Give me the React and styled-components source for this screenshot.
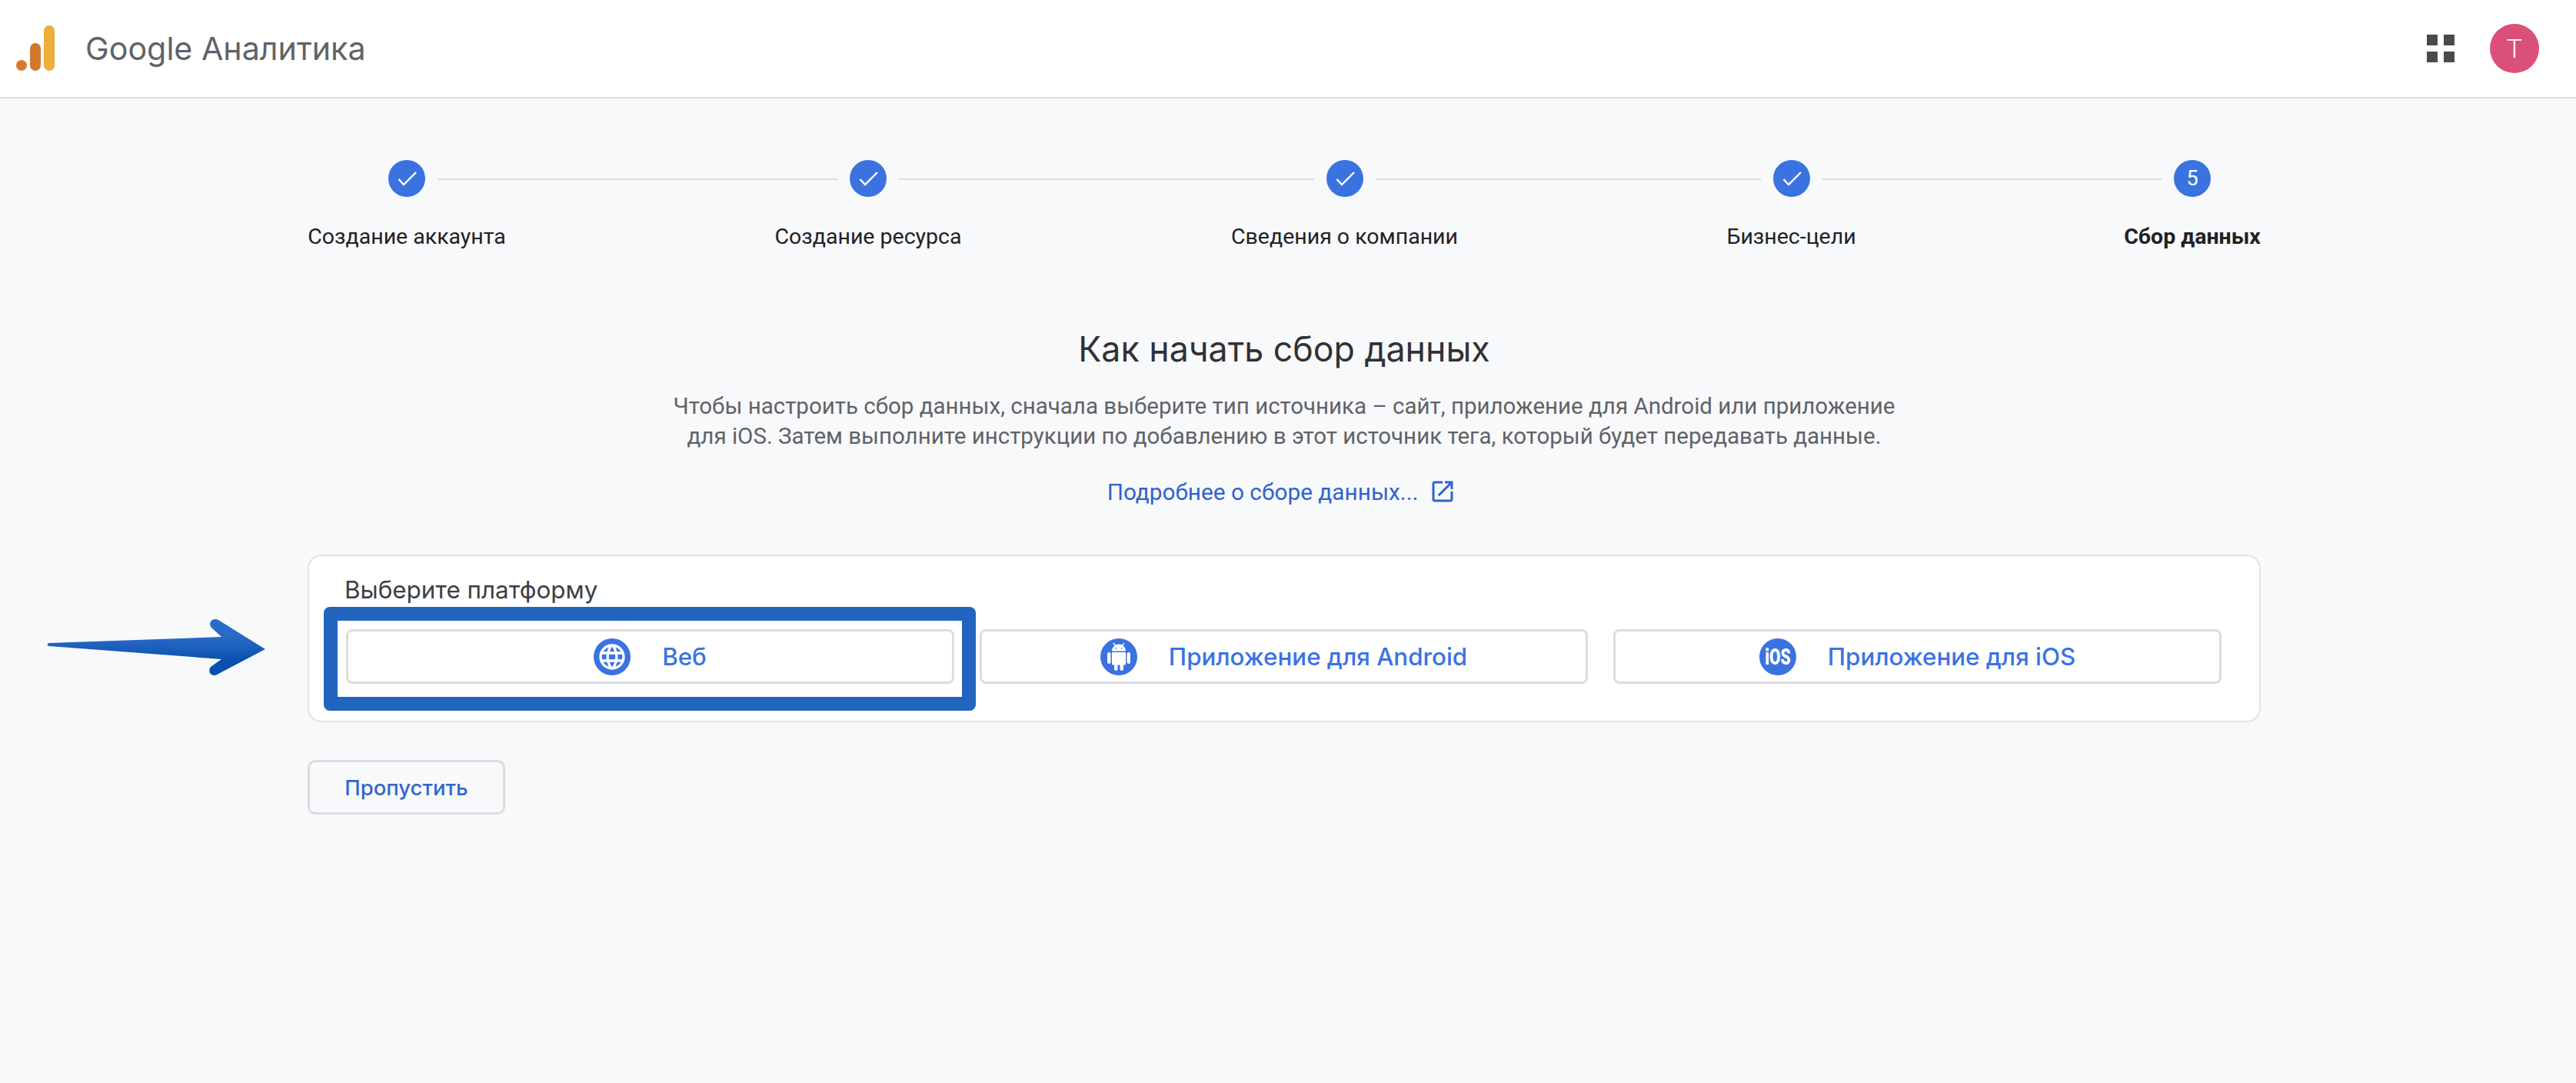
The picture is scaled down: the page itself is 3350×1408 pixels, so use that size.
import React from 'react';
import styled, { createGlobalStyle } from 'styled-components';

const Global = createGlobalStyle`
  html, body { margin: 0; padding: 0; background: #f8f9fb; }
  body { font-family: Roboto, "Liberation Sans", sans-serif; }
`;

const Page = styled.div`
  position: relative;
  width: 3350px;
  height: 1408px;
  overflow: hidden;
  background: #f8f9fb;
`;

const Header = styled.header`
  display: flex;
  align-items: center;
  height: 126px;
  padding: 0 48px 0 21px;
  background: #fff;
  border-bottom: 2px solid #dcdce2;
`;

const Logo = styled.svg`
  width: 50px;
  height: 60px;
  flex: none;
`;

const Title = styled.div`
  margin-left: 40px;
  font-family: "Inter", sans-serif;
  font-size: 41.2px;
  line-height: 60px;
  color: #5f6368;
`;

const HeaderRight = styled.div`
  margin-left: auto;
  display: flex;
  align-items: center;
  gap: 46px;
`;

const Apps = styled.div`
  display: grid;
  grid-template-columns: 14px 14px;
  grid-auto-rows: 14px;
  gap: 8px;
`;

const AppDot = styled.span`
  background: #4a4a4a;
`;

const Avatar = styled.div`
  width: 64px;
  height: 64px;
  border-radius: 50%;
  background: #db5078;
  color: #fff;
  display: flex;
  align-items: center;
  justify-content: center;
  font-size: 34px;
  font-weight: 300;
`;

const Main = styled.main`
  padding: 80px 410px 0 400px;
`;

const Stepper = styled.div`
  display: flex;
  align-items: flex-start;
`;

const Step = styled.div`
  flex: none;
  width: ${p => p.$w}px;
  display: flex;
  flex-direction: column;
  align-items: center;
  position: relative;
`;

const StepCircle = styled.div`
  width: 48px;
  height: 48px;
  border-radius: 50%;
  background: #3a73e0;
  color: #fff;
  display: flex;
  align-items: center;
  justify-content: center;
  font-size: 27px;
`;

const StepLabel = styled.div`
  margin-top: 32px;
  font-size: 28.5px;
  line-height: 40px;
  white-space: nowrap;
  color: #202124;
  font-weight: ${p => (p.$active ? 700 : 400)};
`;

const ConnectorSlot = styled.div`
  flex: 1;
  min-width: 0;
  padding-top: 24px;
`;

const ConnectorLine = styled.div`
  height: 2px;
  margin-left: -${p => p.$l}px;
  margin-right: -${p => p.$r}px;
  background: #dadce0;
`;

const Heading = styled.h1`
  margin: 96px 0 0;
  text-align: center;
  font-family: "Inter", sans-serif;
  font-weight: 400;
  font-size: 44.7px;
  line-height: 60px;
  color: #303134;
`;

const Lead = styled.p`
  margin: 25px auto 0;
  width: 1640px;
  text-align: center;
  font-size: 29.5px;
  line-height: 39px;
  color: #5f6368;
`;

const LinkRow = styled.a`
  margin-top: 32px;
  padding-right: 6px;
  display: flex;
  justify-content: center;
  align-items: center;
  gap: 14px;
  height: 40px;
  font-size: 29.8px;
  color: #2f63cf;
`;

const Card = styled.section`
  margin-top: 62px;
  height: 218px;
  box-sizing: border-box;
  padding: 24px 48px 0;
  background: #fff;
  border: 2px solid #e3e3e6;
  border-radius: 18px;
`;

const CardLabel = styled.div`
  margin-left: -2px;
  font-family: "Inter", sans-serif;
  font-size: 31.4px;
  line-height: 40px;
  color: #3c4043;
`;

const Platforms = styled.div`
  margin-top: 31px;
  display: grid;
  grid-template-columns: repeat(3, 791px);
  gap: 33px;
`;

const PlatformButton = styled.div`
  position: relative;
  box-sizing: border-box;
  height: 71px;
  display: flex;
  align-items: center;
  justify-content: center;
  gap: 41px;
  border: 3px solid #dddde2;
  border-radius: 8px;
  background: #fff;
  font-family: "Inter", sans-serif;
  font-size: 31.3px;
  font-weight: 500;
  color: #3a73e2;
`;

const Highlight = styled.div`
  position: absolute;
  left: -32px;
  top: -32px;
  right: -31px;
  bottom: -38px;
  border: 18px solid #2265bf;
  border-radius: 8px;
  pointer-events: none;
`;

const IconCircle = styled.div`
  width: 48px;
  height: 48px;
  flex: none;
  border-radius: 50%;
  background: #3a73e0;
  color: #fff;
  display: flex;
  align-items: center;
  justify-content: center;
  overflow: hidden;
`;

const IosGlyph = styled.span`
  display: block;
  font-family: Roboto, sans-serif;
  font-size: 30px;
  font-weight: 900;
  line-height: 1;
  transform: scaleX(0.7);
`;

const SkipButton = styled.div`
  margin-top: 49px;
  width: 257px;
  height: 71px;
  box-sizing: border-box;
  display: flex;
  align-items: center;
  justify-content: center;
  border: 3px solid #dadce0;
  border-radius: 10px;
  font-family: "Inter", sans-serif;
  font-size: 27.5px;
  font-weight: 500;
  color: #3366cc;
`;

const Arrow = styled.svg`
  position: absolute;
  left: 56px;
  top: 800px;
  width: 296px;
  height: 84px;
`;

const Check = () => (
  <svg width="48" height="48" viewBox="0 0 48 48" fill="none">
    <path d="M13.5 25l6.5 7L36 16" stroke="#fff" strokeWidth="2.4" />
  </svg>
);

const steps = [
  { label: 'Создание аккаунта', w: 258 },
  { label: 'Создание ресурса', w: 244 },
  { label: 'Сведения о компании', w: 297 },
  { label: 'Бизнес-цели', w: 167 },
  { label: 'Сбор данных', w: 178, active: true, n: 5 },
];

const side = w => w / 2 - 40;

export default function App() {
  return (
    <Page>
      <Global />
      <Header>
        <Logo viewBox="0 0 50 60">
          <circle cx="7" cy="52" r="7" fill="#d8782c" />
          <rect x="18" y="23" width="14" height="36" rx="7" fill="#d5772b" />
          <rect x="36" y="0" width="14" height="59" rx="7" fill="#eeae3a" />
        </Logo>
        <Title>Google Аналитика</Title>
        <HeaderRight>
          <Apps>
            <AppDot /><AppDot /><AppDot /><AppDot />
          </Apps>
          <Avatar>T</Avatar>
        </HeaderRight>
      </Header>
      <Main>
        <Stepper>
          {steps.map((s, i) => (
            <React.Fragment key={s.label}>
              <Step $w={s.w}>
                <StepCircle>{s.n || <Check />}</StepCircle>
                <StepLabel $active={s.active}>{s.label}</StepLabel>
              </Step>
              {i < steps.length - 1 && (
                <ConnectorSlot>
                  <ConnectorLine $l={side(s.w)} $r={side(steps[i + 1].w)} />
                </ConnectorSlot>
              )}
            </React.Fragment>
          ))}
        </Stepper>
        <Heading>Как начать сбор данных</Heading>
        <Lead>
          Чтобы настроить сбор данных, сначала выберите тип источника – сайт, приложение для Android или приложение
          для iOS. Затем выполните инструкции по добавлению в этот источник тега, который будет передавать данные.
        </Lead>
        <LinkRow>
          Подробнее о сборе данных...
          <svg width="36" height="36" viewBox="0 0 24 24" fill="currentColor">
            <path d="M19 19H5V5h7V3H5c-1.11 0-2 .9-2 2v14c0 1.1.89 2 2 2h14c1.1 0 2-.9 2-2v-7h-2v7zM14 3v2h3.59l-9.83 9.83 1.41 1.41L19 6.41V10h2V3h-7z" />
          </svg>
        </LinkRow>
        <Card>
          <CardLabel>Выберите платформу</CardLabel>
          <Platforms>
            <PlatformButton>
              <IconCircle>
                <svg width="40" height="40" viewBox="0 0 24 24" fill="currentColor">
                  <path d="M11.99 2C6.47 2 2 6.48 2 12s4.47 10 9.99 10C17.52 22 22 17.52 22 12S17.52 2 11.99 2zm6.93 6h-2.95c-.32-1.25-.78-2.45-1.38-3.56 1.84.63 3.37 1.91 4.33 3.56zM12 4.04c.83 1.2 1.48 2.53 1.91 3.96h-3.82c.43-1.43 1.08-2.76 1.91-3.96zM4.26 14C4.1 13.36 4 12.69 4 12s.1-1.36.26-2h3.38c-.08.66-.14 1.32-.14 2 0 .68.06 1.34.14 2H4.26zm.82 2h2.95c.32 1.25.78 2.45 1.38 3.56-1.84-.63-3.37-1.9-4.33-3.56zm2.95-8H5.08c.96-1.66 2.49-2.93 4.33-3.56C8.81 5.55 8.35 6.75 8.03 8zM12 19.96c-.83-1.2-1.48-2.53-1.91-3.96h3.82c-.43 1.43-1.08 2.76-1.91 3.96zM14.34 14H9.66c-.09-.66-.16-1.32-.16-2 0-.68.07-1.35.16-2h4.68c.09.65.16 1.32.16 2 0 .68-.07 1.34-.16 2zm.25 5.56c.6-1.11 1.06-2.31 1.38-3.56h2.95c-.96 1.65-2.49 2.93-4.33 3.56zM16.36 14c.08-.66.14-1.32.14-2 0-.68-.06-1.34-.14-2h3.38c.16.64.26 1.31.26 2s-.1 1.36-.26 2h-3.38z" />
                </svg>
              </IconCircle>
              Веб
              <Highlight />
            </PlatformButton>
            <PlatformButton>
              <IconCircle>
                <svg width="36" height="36" viewBox="0 0 24 24" fill="currentColor">
                  <path d="M6 18c0 .55.45 1 1 1h1v3.5c0 .83.67 1.5 1.5 1.5s1.5-.67 1.5-1.5V19h2v3.5c0 .83.67 1.5 1.5 1.5s1.5-.67 1.5-1.5V19h1c.55 0 1-.45 1-1V8H6v10zM3.5 8C2.67 8 2 8.67 2 9.5v7c0 .83.67 1.5 1.5 1.5S5 17.33 5 16.5v-7C5 8.67 4.33 8 3.5 8zm17 0c-.83 0-1.5.67-1.5 1.5v7c0 .83.67 1.5 1.5 1.5s1.5-.67 1.5-1.5v-7c0-.83-.67-1.5-1.5-1.5zm-4.97-5.84l1.3-1.3c.2-.2.2-.51 0-.71-.2-.2-.51-.2-.71 0l-1.48 1.48C13.85 1.23 12.95 1 12 1c-.96 0-1.86.23-2.66.63L7.85.15c-.2-.2-.51-.2-.71 0-.2.2-.2.51 0 .71l1.31 1.31C6.97 3.26 6 5.01 6 7h12c0-1.99-.97-3.75-2.47-4.84zM10 5H9V4h1v1zm5 0h-1V4h1v1z" />
                </svg>
              </IconCircle>
              Приложение для Android
            </PlatformButton>
            <PlatformButton>
              <IconCircle>
                <IosGlyph>iOS</IosGlyph>
              </IconCircle>
              Приложение для iOS
            </PlatformButton>
          </Platforms>
        </Card>
        <SkipButton>Пропустить</SkipButton>
      </Main>
      <Arrow viewBox="0 0 296 84">
        <defs>
          <linearGradient id="arrowFill" x1="0" y1="0" x2="0" y2="1">
            <stop offset="0.3" stopColor="#2a6bc8" />
            <stop offset="0.75" stopColor="#0a4fad" />
          </linearGradient>
        </defs>
        <path
          d="M8 36L232 28 219 16C214 10 220 2 228 6L289 44 228 76C220 82 213 74 218 67L232 57 8 40C5 40 5 36 8 36Z"
          fill="url(#arrowFill)"
        />
      </Arrow>
    </Page>
  );
}
